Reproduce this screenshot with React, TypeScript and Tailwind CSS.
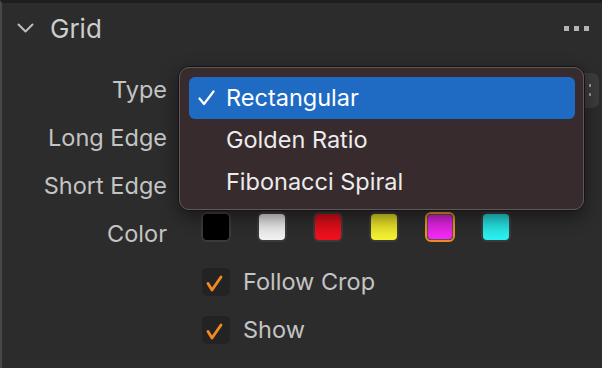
import React from 'react';

const swatches = [
  { name: 'black', fill: 'bg-black', ring: 'border-[#3a3a3a]' },
  { name: 'white', fill: 'bg-gradient-to-b from-[#d6d6d6] to-[#f2f2f2]', ring: 'border-[#3a3a3a]' },
  { name: 'red', fill: 'bg-gradient-to-b from-[#cc0d18] to-[#f0101e]', ring: 'border-[#3a3a3a]' },
  { name: 'yellow', fill: 'bg-gradient-to-b from-[#d8cf22] to-[#f4f232]', ring: 'border-[#3a3a3a]' },
  { name: 'magenta', fill: 'bg-gradient-to-b from-[#cf1fcf] to-[#f42af4]', ring: 'border-[#f08a24]' },
  { name: 'cyan', fill: 'bg-gradient-to-b from-[#22cccc] to-[#2af2f2]', ring: 'border-[#3a3a3a]' },
];

const options = ['Rectangular', 'Golden Ratio', 'Fibonacci Spiral'];

const Check = () => (
  <svg width="28" height="28" viewBox="0 0 28 28" fill="none">
    <path d="M6 15.5 L10 22 L19 9" stroke="#f28a22" strokeWidth="2.8" strokeLinecap="round" strokeLinejoin="round" />
  </svg>
);

const Checkbox = ({ label }: { label: string }) => (
  <div className="flex items-center gap-[13px]">
    <div className="w-[28px] h-[28px] rounded-[5px] bg-[#232323]">
      <Check />
    </div>
    <span className="text-[23.5px] text-[#c4c4c4]">{label}</span>
  </div>
);

export default function App() {
  return (
    <div
      className="relative w-[602px] h-[368px] overflow-hidden bg-[#2c2c2c] border-t-[3px] border-t-[#1e1e1e] border-l-2 border-l-[#474747]"
      style={{ fontFamily: 'Inter, "Noto Sans", sans-serif' }}
    >
      {/* Header */}
      <div className="h-[50px] mb-[13px] flex items-center pl-[15px] pr-[13px]">
        <svg width="17" height="10" viewBox="0 0 17 10" fill="none">
          <path d="M1.5 1.5 L8.5 8.5 L15.5 1.5" stroke="#bdbdbd" strokeWidth="2" strokeLinecap="round" strokeLinejoin="round" />
        </svg>
        <span className="ml-[16px] text-[26px] text-[#cdcdcd]">Grid</span>
        <div className="ml-auto flex gap-[5px]">
          <div className="w-[5px] h-[5px] bg-[#b4b4b4]" />
          <div className="w-[5px] h-[5px] bg-[#b4b4b4]" />
          <div className="w-[5px] h-[5px] bg-[#b4b4b4]" />
        </div>
      </div>

      {/* Form */}
      <div className="grid grid-cols-[165px_1fr] gap-x-[34px] auto-rows-[48px] text-[23.5px] text-[#c4c4c4]">
        <div className="flex items-center justify-end">Type</div>
        <div className="flex items-center pr-[3px]">
          <div className="h-[35px] w-full rounded-[7px] bg-[#3c3c3c] flex items-center justify-end pr-[8px]">
            <div className="flex flex-col gap-[6px]">
              <div className="w-[2px] h-[3px] bg-[#9a9a9a]" />
              <div className="w-[2px] h-[3px] bg-[#9a9a9a]" />
            </div>
          </div>
        </div>

        <div className="flex items-center justify-end">Long Edge</div>
        <div />

        <div className="flex items-center justify-end">Short Edge</div>
        <div />

        <div className="flex items-center justify-end">Color</div>
        <div className="flex items-start pt-[2px] gap-[26px]">
          {swatches.map((s) => (
            <div key={s.name} className={`w-[30px] h-[30px] rounded-[6px] border-2 ${s.ring}`}>
              <div className={`w-full h-full rounded-[4px] ${s.fill} ${s.name === 'magenta' ? 'border border-[#555]' : ''}`} />
            </div>
          ))}
        </div>

        <div />
        <div className="flex items-center pl-[1px]">
          <Checkbox label="Follow Crop" />
        </div>

        <div />
        <div className="flex items-center pl-[1px]">
          <Checkbox label="Show" />
        </div>
      </div>

      {/* Dropdown menu */}
      <div className="absolute left-[176px] top-[63px] w-[407px] h-[145px] rounded-[11px] border border-[#141414] shadow-[0_6px_18px_rgba(0,0,0,0.45)]">
        <div className="w-full h-full rounded-[10px] border border-[#5e5859] bg-[#372b2e] pt-[9px] pl-[9px] pr-[8px]">
          {options.map((o, i) => (
            <div
              key={o}
              className={`h-[42px] rounded-[6px] flex items-center text-[23.5px] ${i === 0 ? 'bg-[#1f6bc3] text-white' : 'text-[#ececec]'}`}
            >
              <span className="w-[37px] flex justify-start pl-[9px]">
                {i === 0 ? (
                  <svg width="17" height="16" viewBox="0 0 17 16" fill="none">
                    <path d="M1.5 8.5 L6 14 L15.5 1.5" stroke="white" strokeWidth="2.2" strokeLinecap="round" strokeLinejoin="round" />
                  </svg>
                ) : null}
              </span>
              <span>{o}</span>
            </div>
          ))}
        </div>
      </div>
    </div>
  );
}
